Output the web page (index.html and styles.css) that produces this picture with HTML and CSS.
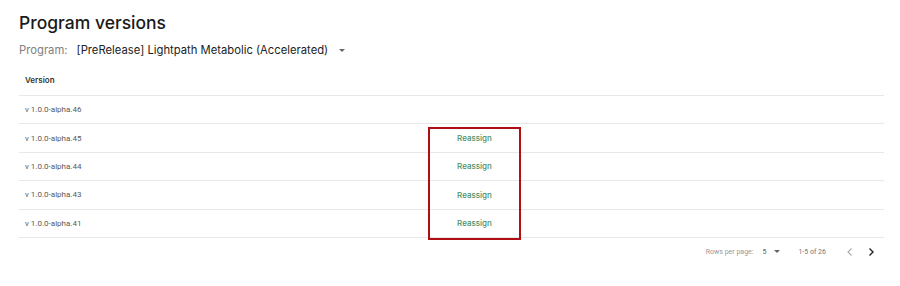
FILE: index.html
```html
<!DOCTYPE html>
<html lang="en">
<head>
    <meta charset="UTF-8">
    <title>Program versions</title>
    <link rel="stylesheet" href="styles.css">
</head>
<body>
    <div class="page">
        <h1>Program versions</h1>
        <div class="program-select">
            <span class="label">Program:</span>
            <span class="value">[PreRelease] Lightpath Metabolic (Accelerated)</span>
            <span class="caret"></span>
        </div>

        <div class="table">
            <div class="row head">
                <div class="cell">Version</div>
                <div class="cell"></div>
                <div class="cell"></div>
            </div>
            <div class="row">
                <div class="cell">v 1.0.0-alpha.46</div>
                <div class="cell"></div>
                <div class="cell"></div>
            </div>
            <div class="row">
                <div class="cell">v 1.0.0-alpha.45</div>
                <div class="cell action">Reassign</div>
                <div class="cell"></div>
            </div>
            <div class="row">
                <div class="cell">v 1.0.0-alpha.44</div>
                <div class="cell action">Reassign</div>
                <div class="cell"></div>
            </div>
            <div class="row">
                <div class="cell">v 1.0.0-alpha.43</div>
                <div class="cell action">Reassign</div>
                <div class="cell"></div>
            </div>
            <div class="row">
                <div class="cell">v 1.0.0-alpha.41</div>
                <div class="cell action">Reassign</div>
                <div class="cell"></div>
            </div>
            <!-- highlight box drawn over the reassign column -->
            <div class="highlight"></div>
        </div>

        <div class="pager">
            <span>Rows per page:</span>
            <span class="rows">5 <span class="caret small"></span></span>
            <span class="range">1-5 of 26</span>
            <svg class="nav disabled" width="12" height="12" viewBox="0 0 12 12"><path d="M7.5 2.5 L4 6 L7.5 9.5" fill="none" stroke="currentColor" stroke-width="1.1"/></svg>
            <svg class="nav" width="12" height="12" viewBox="0 0 12 12"><path d="M4.5 2.5 L8 6 L4.5 9.5" fill="none" stroke="currentColor" stroke-width="1.4"/></svg>
        </div>
    </div>
</body>
</html>
```

FILE: styles.css
```css
body {
    margin: 0;
    background: #fff;
    font-family: Inter, 'Noto Sans', sans-serif;
    color: #1f1f1f;
}

.page {
    padding: 11px 16px 0 19px;
}

h1 {
    font-size: 17.5px;
    font-weight: 500;
    margin: 0;
    line-height: 24px;
    color: #1a1a1a;
}

.program-select {
    display: flex;
    align-items: center;
    margin-top: 5px;
    font-size: 11.25px;
    height: 20px;
}

.program-select .label {
    color: #808080;
    margin-right: 9px;
}

.program-select .value {
    color: #222;
}

.caret {
    width: 0;
    height: 0;
    border-left: 3px solid transparent;
    border-right: 3px solid transparent;
    border-top: 3px solid #666;
    margin-left: 11px;
}

.table {
    position: relative;
    margin-top: 5px;
}

.row {
    box-sizing: border-box;
    display: grid;
    grid-template-columns: 409px 93px 1fr;
    height: 28.4px;
    align-items: center;
    border-bottom: 1px solid #e8e8e8;
    font-family: Roboto, 'Liberation Sans', sans-serif;
    font-size: 8px;
    color: #5a5a5a;
}

.row.head {
    height: 31px;
    font-family: Inter, sans-serif;
    font-weight: 600;
    color: #333;
}

.cell {
    padding-left: 6px;
}

.cell.action {
    padding-left: 0;
    text-align: center;
    color: #4a8f66;
    font-family: Inter, sans-serif;
    font-weight: 500;
}

.highlight {
    position: absolute;
    left: 409px;
    top: 62px;
    width: 89px;
    height: 109px;
    border: 2px solid #b00d14;
}

.pager {
    display: flex;
    align-items: center;
    justify-content: flex-end;
    height: 28px;
    font-family: Roboto, sans-serif;
    font-size: 7px;
    color: #999;
    padding-right: 7px;
}

.pager .rows {
    display: flex;
    align-items: center;
    margin-left: 9px;
    color: #555;
}

.caret.small {
    margin-left: 8px;
}

.pager .range {
    margin-left: 18px;
    margin-right: 18px;
    color: #777;
}

.nav {
    color: #222;
}

.nav + .nav {
    margin-left: 9px;
}

.nav.disabled {
    color: #aaa;
}
```
